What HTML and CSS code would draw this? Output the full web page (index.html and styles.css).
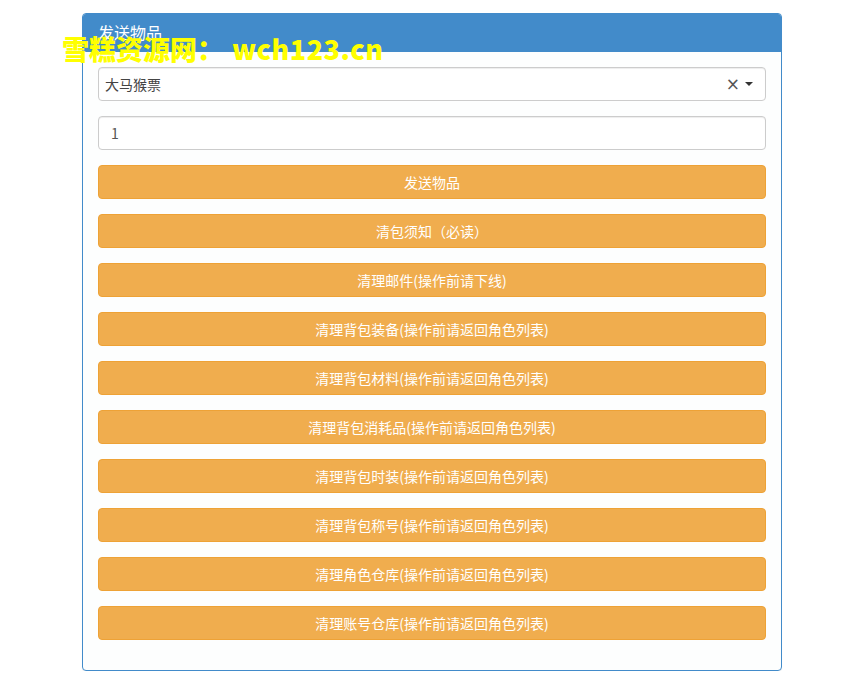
FILE: index.html
```html
<!DOCTYPE html>
<html lang="zh-CN">
<head>
<meta charset="utf-8">
<title>发送物品</title>
<link rel="stylesheet" href="styles.css">
</head>
<body>
<div class="page">
  <div class="panel">
    <div class="panel-heading">发送物品</div>
    <div class="panel-body">
      <div class="select">
        <span class="select-value">大马猴票</span>
        <span class="select-clear">×</span>
        <span class="select-arrow"></span>
      </div>
      <input class="input" type="text" value="1">
      <button class="btn">发送物品</button>
      <button class="btn">清包须知（必读）</button>
      <button class="btn">清理邮件(操作前请下线)</button>
      <button class="btn">清理背包装备(操作前请返回角色列表)</button>
      <button class="btn">清理背包材料(操作前请返回角色列表)</button>
      <button class="btn">清理背包消耗品(操作前请返回角色列表)</button>
      <button class="btn">清理背包时装(操作前请返回角色列表)</button>
      <button class="btn">清理背包称号(操作前请返回角色列表)</button>
      <button class="btn">清理角色仓库(操作前请返回角色列表)</button>
      <button class="btn">清理账号仓库(操作前请返回角色列表)</button>
    </div>
  </div>
  <div class="watermark"><span class="wm-cn">雪糕资源网：</span><span class="wm-en">wch123.cn</span></div>
</div>
</body>
</html>
```

FILE: styles.css
```css
* { box-sizing: border-box; }
html, body { margin: 0; padding: 0; background: #ffffff; }
body {
  font-family: "Noto Sans CJK SC", "Noto Sans", sans-serif;
  font-size: 14px;
  color: #333;
}
.page {
  position: relative;
  padding: 13px 0 0 82px;
}
.panel {
  width: 700px;
  border: 1px solid #428bca;
  border-radius: 4px;
  background: #fdfefe;
  box-shadow: 0 1px 1px rgba(0,0,0,0.05);
}
.panel-heading {
  height: 38px;
  background: #428bca;
  color: #fff;
  font-size: 16px;
  line-height: 16px;
  padding: 10px 15px;
  border-radius: 3px 3px 0 0;
}
.panel-body {
  padding: 15px 15px 30px;
  display: flex;
  flex-direction: column;
  gap: 15px;
}
.select, .input {
  height: 34px;
  border: 1px solid #ccc;
  border-radius: 4px;
  background: #fff;
  box-shadow: inset 0 1px 1px rgba(0,0,0,0.075);
}
.select {
  display: flex;
  align-items: center;
  padding: 0 12px 0 6px;
}
.select-value { flex: 1; color: #444; font-size: 14px; }
.select-clear { color: #555; font-size: 17px; line-height: 1; margin-right: 5px; font-family: "DejaVu Sans", sans-serif; }
.select-arrow {
  width: 0; height: 0;
  border-left: 4px solid transparent;
  border-right: 4px solid transparent;
  border-top: 4px solid #333;
}
.input {
  width: 100%;
  padding: 6px 12px;
  font-family: inherit;
  font-size: 14px;
  color: #555;
  outline: none;
}
.btn {
  height: 34px;
  width: 100%;
  background: #f0ad4e;
  border: 1px solid #eea236;
  border-radius: 4px;
  color: #fff;
  font-family: inherit;
  font-size: 14px;
  padding: 0;
  cursor: pointer;
}
.watermark {
  position: absolute;
  left: 62px;
  top: 30px;
  display: flex;
  align-items: center;
  font-family: "Noto Sans CJK SC", sans-serif;
  font-weight: 900;
  font-size: 27px;
  line-height: 38px;
  color: #ffff00;
  white-space: nowrap;
}
.wm-cn { letter-spacing: 0; }
.wm-en { margin-left: 8px; letter-spacing: 0.5px; }
```
